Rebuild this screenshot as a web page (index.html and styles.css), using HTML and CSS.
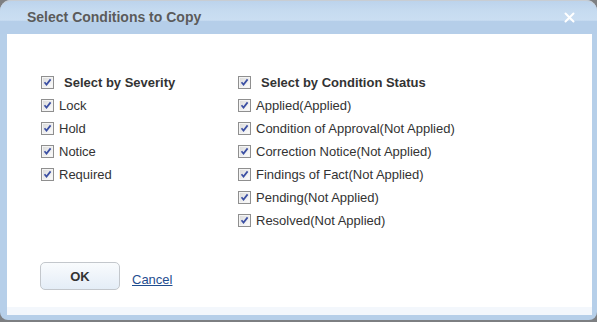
FILE: index.html
```html
<!DOCTYPE html>
<html>
<head>
<meta charset="utf-8">
<link rel="stylesheet" href="styles.css">
</head>
<body>
<div class="dialog">
  <div class="titlebar">
    <span class="title">Select Conditions to Copy</span>
    <span class="close">
      <svg width="11" height="11" viewBox="0 0 11 11"><path d="M1.5 1.5 L9.5 9.5 M9.5 1.5 L1.5 9.5" stroke="#ffffff" stroke-width="2" stroke-linecap="round"/></svg>
    </span>
  </div>
  <div class="content">
    <div class="columns">
      <div class="col col-left">
        <div class="row head"><span class="cb"></span><span class="label">Select by Severity</span></div>
        <div class="row"><span class="cb"></span><span class="label">Lock</span></div>
        <div class="row"><span class="cb"></span><span class="label">Hold</span></div>
        <div class="row"><span class="cb"></span><span class="label">Notice</span></div>
        <div class="row"><span class="cb"></span><span class="label">Required</span></div>
      </div>
      <div class="col col-right">
        <div class="row head"><span class="cb"></span><span class="label">Select by Condition Status</span></div>
        <div class="row"><span class="cb"></span><span class="label">Applied(Applied)</span></div>
        <div class="row"><span class="cb"></span><span class="label">Condition of Approval(Not Applied)</span></div>
        <div class="row"><span class="cb"></span><span class="label">Correction Notice(Not Applied)</span></div>
        <div class="row"><span class="cb"></span><span class="label">Findings of Fact(Not Applied)</span></div>
        <div class="row"><span class="cb"></span><span class="label">Pending(Not Applied)</span></div>
        <div class="row"><span class="cb"></span><span class="label">Resolved(Not Applied)</span></div>
      </div>
    </div>
    <div class="actions">
      <button class="ok">OK</button>
      <a class="cancel" href="#">Cancel</a>
    </div>
  </div>
  <div class="footstrip"></div>
</div>
</body>
</html>
```
FILE: styles.css
```css
html, body {
  margin: 0;
  padding: 0;
}
body {
  background: #7d7f82;
  width: 597px;
  height: 322px;
  overflow: hidden;
  font-family: "Liberation Sans", Arial, sans-serif;
}
.dialog {
  width: 597px;
  height: 320px;
  box-sizing: border-box;
  background: #b6cfe9;
  border-radius: 11px 11px 8px 8px;
  padding: 0 5px 5px 7px;
  display: flex;
  flex-direction: column;
}
.titlebar {
  height: 34px;
  margin: 0 -5px 0 -7px;
  padding: 0 22px 0 27px;
  border-radius: 11px 11px 0 0;
  background: linear-gradient(#bcd3ec 0, #c6dbf0 30%, #cadef2 58%, #b5cee9 62%, #b5cee9 100%);
  border-top: 1px solid #c8cdd3;
  box-sizing: border-box;
  display: flex;
  align-items: center;
  justify-content: space-between;
}
.title {
  font-size: 14px;
  font-weight: bold;
  color: #5b5b5b;
  margin-top: -1px;
}
.close {
  display: flex;
  margin-top: -1px;
}
.content {
  flex: 1;
  background: #ffffff;
  display: flex;
  flex-direction: column;
  padding: 37px 0 0 34px;
}
.columns {
  display: flex;
}
.col-left {
  width: 197px;
}
.row {
  height: 23px;
  display: flex;
  align-items: center;
  font-size: 13px;
  color: #333333;
}
.cb {
  width: 11px;
  height: 11px;
  border: 1px solid #8f8f8f;
  background-color: #f0f0f0;
  background-image: url("data:image/svg+xml;utf8,<svg xmlns='http://www.w3.org/2000/svg' width='11' height='11' viewBox='0 0 11 11'><defs><linearGradient id='g' x1='0' y1='0' x2='1' y2='1'><stop offset='0' stop-color='%23d8d8d8'/><stop offset='1' stop-color='%23ffffff'/></linearGradient></defs><rect x='0' y='0' width='11' height='11' fill='url(%23g)'/><rect x='0.5' y='0.5' width='10' height='10' fill='none' stroke='%23f4f4f4'/><path d='M2.5 5.3 L4.5 7.6 L8.6 2.4' fill='none' stroke='%233b4fa3' stroke-width='1.7'/></svg>");
  flex: none;
  margin-right: 5px;
}
.head .label {
  font-weight: bold;
  margin-left: 5px;
}
.actions {
  display: flex;
  align-items: center;
  margin-top: 30px;
  margin-left: -1px;
}
.ok {
  width: 80px;
  height: 28px;
  border: 1px solid #c3c7cc;
  border-radius: 5px;
  background: linear-gradient(#f9fbfd, #e4edf7);
  font-family: "Liberation Sans", Arial, sans-serif;
  font-size: 13px;
  font-weight: bold;
  color: #333333;
  padding: 0;
  margin-right: 12px;
}
.cancel {
  font-size: 13px;
  color: #1f4d8f;
  text-decoration: underline;
  margin-top: 6px;
}
.footstrip {
  height: 8px;
  background: #f3f7fc;
}
```
